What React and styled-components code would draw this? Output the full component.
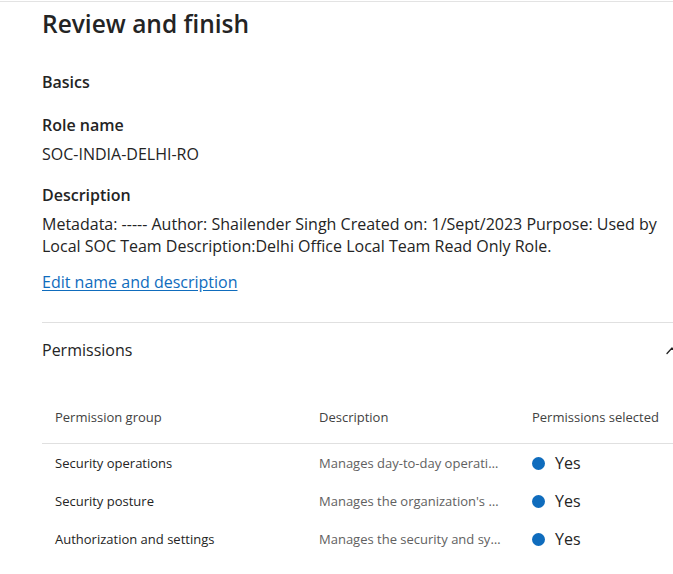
import React from "react";
import styled, { createGlobalStyle } from "styled-components";

const GlobalStyle = createGlobalStyle`
  html, body {
    margin: 0;
    padding: 0;
    background: #ffffff;
    overflow: hidden;
  }
  body {
    font-family: "Segoe UI", "Open Sans", "Liberation Sans", sans-serif;
    color: #242424;
  }
`;

const Frame = styled.div`
  margin-top: 1px;
  border-top: 1px solid #e3e3e3;
  padding: 6px 0 40px 42px;
  width: 638px;
`;

const Title = styled.h1`
  margin: 0;
  font-size: 24.5px;
  line-height: 32px;
  font-weight: 600;
  color: #242424;
`;

const SectionTitle = styled.h2`
  margin: 31px 0 0;
  font-size: 16px;
  line-height: 22px;
  font-weight: 600;
`;

const Field = styled.div`
  margin-top: ${(p) => p.$gap || 21}px;
  display: flex;
  flex-direction: column;
  gap: 7px;
`;

const Label = styled.div`
  font-size: 16px;
  line-height: 22px;
  font-weight: 600;
`;

const Value = styled.div`
  font-size: 16px;
  line-height: 22px;
  font-weight: 400;
`;

const EditLink = styled.a`
  display: inline-block;
  margin-top: 14px;
  font-size: 16px;
  line-height: 22px;
  color: #0f6cbd;
  text-decoration: underline;
  text-underline-offset: 2px;
  cursor: pointer;
`;

const Divider = styled.hr`
  margin: 29px 0 0;
  border: none;
  border-top: 1px solid #e0e0e0;
`;

const AccordionHead = styled.div`
  margin-top: 16px;
  display: flex;
  align-items: center;
  justify-content: space-between;
  font-size: 16px;
  line-height: 22px;
  font-weight: 500;
  color: #242424;
`;

const Chevron = () => (
  <svg width="16" height="16" viewBox="0 0 16 16" fill="none">
    <path d="M3 11.5 L8 6 L13 11.5" stroke="#242424" strokeWidth="1.3" strokeLinecap="round" strokeLinejoin="round" />
  </svg>
);

const Table = styled.div`
  margin-top: 46px;
  display: grid;
  grid-template-columns: 264px 213px 1fr;
`;

const HeadCell = styled.div`
  padding: 0 16px 16px 13px;
  font-size: 13px;
  line-height: 20px;
  color: #424242;
  border-bottom: 1px solid #e0e0e0;
  white-space: nowrap;
`;

const Cell = styled.div`
  padding: 9px 16px 9px 13px;
  font-size: 13px;
  line-height: 20px;
  color: ${(p) => (p.$muted ? "#616161" : "#242424")};
  white-space: nowrap;
  overflow: hidden;
  text-overflow: ellipsis;
`;

const StatusCell = styled.div`
  padding: 9px 13px;
  height: 20px;
  display: flex;
  align-items: center;
  gap: 10px;
  font-size: 16px;
  line-height: 20px;
  color: #242424;
`;

const Dot = styled.span`
  width: 13px;
  height: 13px;
  border-radius: 50%;
  background: #0f6cbd;
  flex-shrink: 0;
`;

const rows = [
  {
    group: "Security operations",
    desc: "Manages day-to-day operations and responds to incidents and advisories",
  },
  {
    group: "Security posture",
    desc: "Manages the organization's security posture and vulnerabilities",
  },
  {
    group: "Authorization and settings",
    desc: "Manages the security and system settings for the organization",
  },
];

const App = () => {
  return (
    <Frame>
      <GlobalStyle />
      <Title>Review and finish</Title>
      <SectionTitle>Basics</SectionTitle>

      <Field>
        <Label>Role name</Label>
        <Value>SOC-INDIA-DELHI-RO</Value>
      </Field>

      <Field $gap={19}>
        <Label>Description</Label>
        <Value>
          Metadata: ----- Author: Shailender Singh Created on: 1/Sept/2023 Purpose: Used by
          Local SOC Team Description:Delhi Office Local Team Read Only Role.
        </Value>
      </Field>

      <EditLink>Edit name and description</EditLink>

      <Divider />

      <AccordionHead>
        <span>Permissions</span>
        <Chevron />
      </AccordionHead>

      <Table>
        <HeadCell>Permission group</HeadCell>
        <HeadCell>Description</HeadCell>
        <HeadCell>Permissions selected</HeadCell>
        {rows.map((row) => (
          <React.Fragment key={row.group}>
            <Cell>{row.group}</Cell>
            <Cell $muted>{row.desc}</Cell>
            <StatusCell>
              <Dot />
              Yes
            </StatusCell>
          </React.Fragment>
        ))}
      </Table>
    </Frame>
  );
};

export default App;
